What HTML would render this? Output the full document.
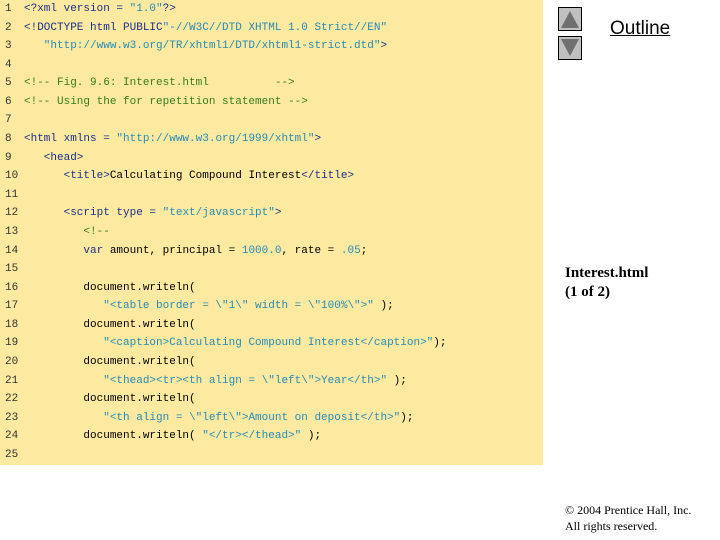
<!DOCTYPE html>
<html><head><style>
body{margin:0;width:720px;height:540px;background:#fff;position:relative;overflow:hidden}
#code{position:absolute;left:0;top:0;width:543px;height:465px;background:#fde9a0}
pre{margin:0;position:absolute;left:0;top:0px;font:11px/18.58px "Liberation Mono",monospace;color:#000}
.n{color:#333;display:inline-block;width:24px;padding-left:5px;box-sizing:border-box}
.t{color:#1c2e8c}.s{color:#2a8ab5}.c{color:#3a7a1a}.k{color:#1c2e8c}
.btn{position:absolute;left:558px;width:22px;height:22px;background:#c0c0c0;border:1px solid #000}
</style></head><body>
<div id="code"><pre><span class="n">1</span><span class="t">&lt;?xml version = </span><span class="s">"1.0"</span><span class="t">?&gt;</span>
<span class="n">2</span><span class="t">&lt;!DOCTYPE html PUBLIC</span><span class="s">"-//W3C//DTD XHTML 1.0 Strict//EN"</span>
<span class="n">3</span><span class="s">   "http://www.w3.org/TR/xhtml1/DTD/xhtml1-strict.dtd"</span><span class="t">&gt;</span>
<span class="n">4</span>
<span class="n">5</span><span class="c">&lt;!-- Fig. 9.6: Interest.html          --&gt;</span>
<span class="n">6</span><span class="c">&lt;!-- Using the for repetition statement --&gt;</span>
<span class="n">7</span>
<span class="n">8</span><span class="t">&lt;html xmlns = </span><span class="s">"http://www.w3.org/1999/xhtml"</span><span class="t">&gt;</span>
<span class="n">9</span><span class="t">   &lt;head&gt;</span>
<span class="n">10</span>      <span class="t">&lt;title&gt;</span>Calculating Compound Interest<span class="t">&lt;/title&gt;</span>
<span class="n">11</span>
<span class="n">12</span>      <span class="t">&lt;script type = </span><span class="s">"text/javascript"</span><span class="t">&gt;</span>
<span class="n">13</span>         <span class="c">&lt;!--</span>
<span class="n">14</span>         <span class="k">var</span> amount, principal = <span class="s">1000.0</span>, rate = <span class="s">.05</span>;
<span class="n">15</span>
<span class="n">16</span>         document.writeln(
<span class="n">17</span>            <span class="s">"&lt;table border = \"1\" width = \"100%\"&gt;"</span> );
<span class="n">18</span>         document.writeln(
<span class="n">19</span>            <span class="s">"&lt;caption&gt;Calculating Compound Interest&lt;/caption&gt;"</span>);
<span class="n">20</span>         document.writeln(
<span class="n">21</span>            <span class="s">"&lt;thead&gt;&lt;tr&gt;&lt;th align = \"left\"&gt;Year&lt;/th&gt;"</span> );
<span class="n">22</span>         document.writeln(
<span class="n">23</span>            <span class="s">"&lt;th align = \"left\"&gt;Amount on deposit&lt;/th&gt;"</span>);
<span class="n">24</span>         document.writeln( <span class="s">"&lt;/tr&gt;&lt;/thead&gt;"</span> );
<span class="n">25</span></pre></div>
<div class="btn" style="top:7px"><svg width="22" height="22"><polygon points="11,3 20,20 2,20" fill="#707070"/></svg></div>
<div class="btn" style="top:36px"><svg width="22" height="22"><polygon points="2,2 20,2 11,19" fill="#707070"/></svg></div>
<div style="position:absolute;left:610px;top:18px;font:19px 'Liberation Sans',sans-serif;text-decoration:underline">Outline</div>
<div style="position:absolute;left:565px;top:264px;font:bold 15px/19px 'Liberation Serif',serif">Interest.html<br>(1 of 2)</div>
<div style="position:absolute;left:565px;top:502px;font:12px/16px 'Liberation Serif',serif">© 2004 Prentice Hall, Inc.<br>All rights reserved.</div>
</body></html>
